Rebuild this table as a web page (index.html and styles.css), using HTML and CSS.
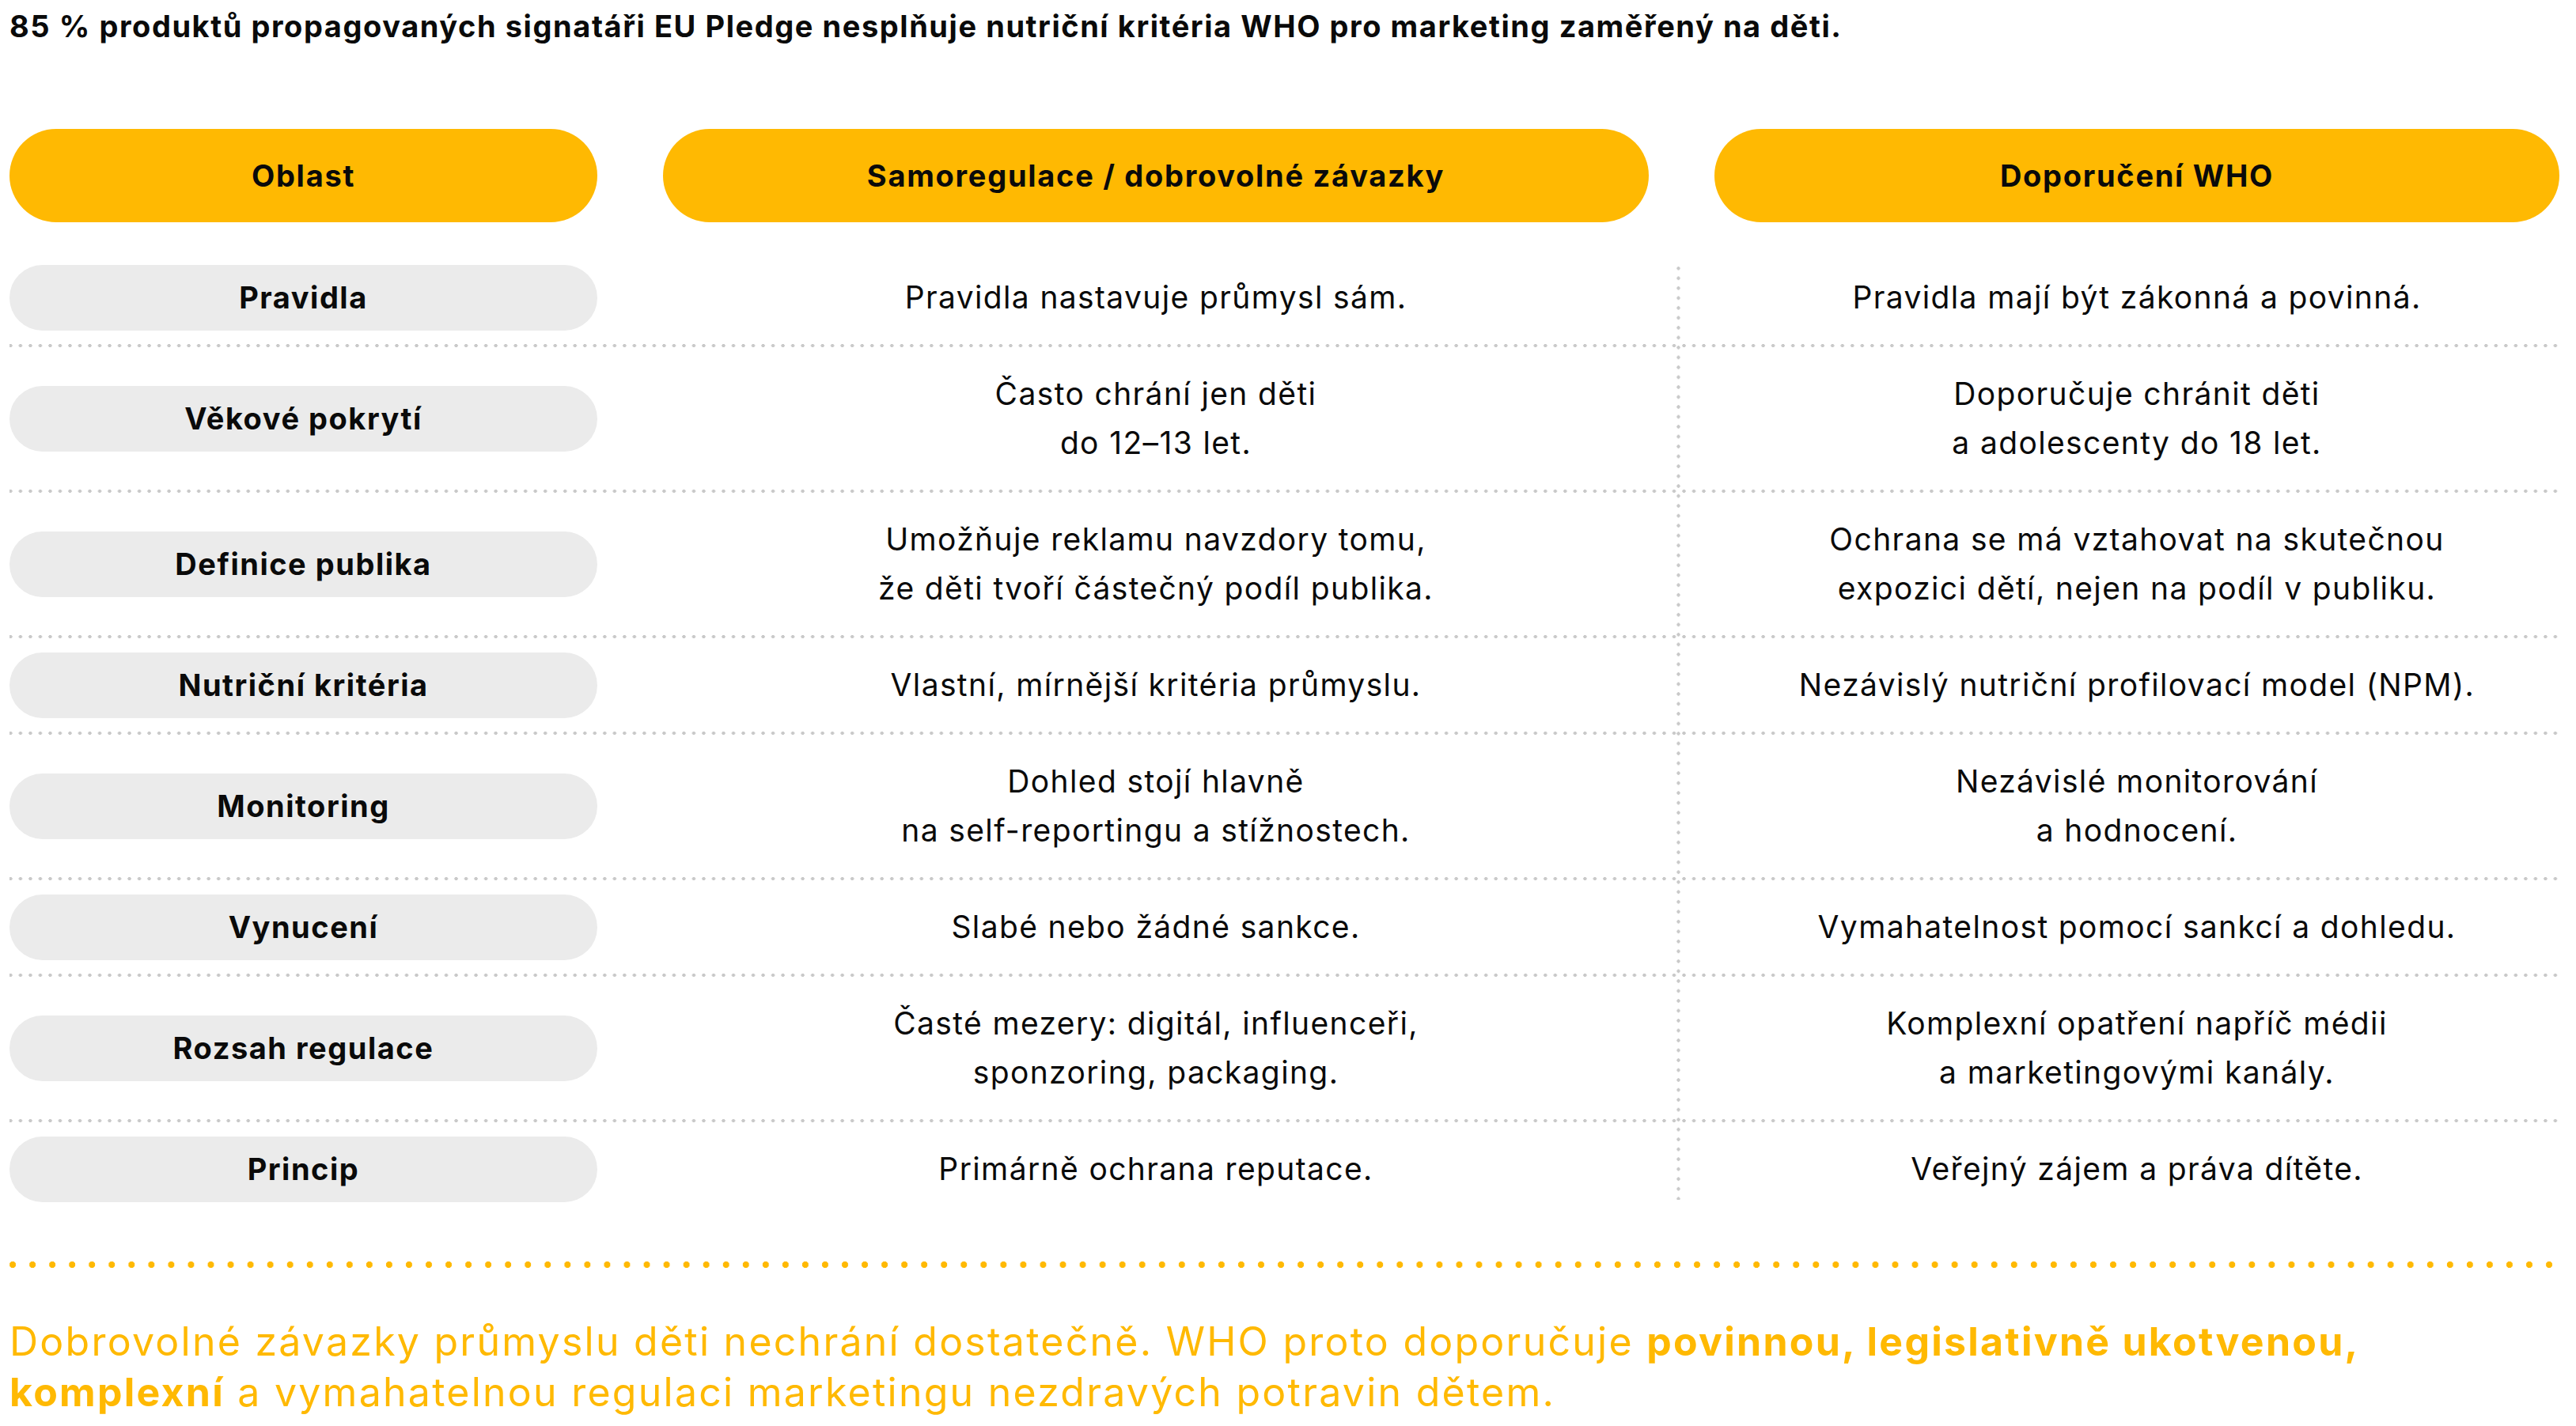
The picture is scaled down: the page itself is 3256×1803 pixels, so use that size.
FILE: index.html
```html
<!DOCTYPE html>
<html lang="cs">
<head>
<meta charset="utf-8">
<title>EU Pledge vs. WHO</title>
<link rel="stylesheet" href="styles.css">
</head>
<body>
<main class="page">
  <h1 class="title">85 % produktů propagovaných signatáři EU Pledge nesplňuje nutriční kritéria WHO pro marketing zaměřený na děti.</h1>

  <div class="thead">
    <div class="hpill">Oblast</div>
    <div class="hpill">Samoregulace / dobrovolné závazky</div>
    <div class="hpill">Doporučení WHO</div>
  </div>

  <div class="tbody">
    <div class="row">
      <div class="label">Pravidla</div>
      <div class="cell">Pravidla nastavuje průmysl sám.</div>
      <div class="cell">Pravidla mají být zákonná a povinná.</div>
    </div>
    <div class="row">
      <div class="label">Věkové pokrytí</div>
      <div class="cell">Často chrání jen děti<br>do 12–13 let.</div>
      <div class="cell">Doporučuje chránit děti<br>a adolescenty do 18 let.</div>
    </div>
    <div class="row">
      <div class="label">Definice publika</div>
      <div class="cell">Umožňuje reklamu navzdory tomu,<br>že děti tvoří částečný podíl publika.</div>
      <div class="cell">Ochrana se má vztahovat na skutečnou<br>expozici dětí, nejen na podíl v publiku.</div>
    </div>
    <div class="row">
      <div class="label">Nutriční kritéria</div>
      <div class="cell">Vlastní, mírnější kritéria průmyslu.</div>
      <div class="cell">Nezávislý nutriční profilovací model (NPM).</div>
    </div>
    <div class="row">
      <div class="label">Monitoring</div>
      <div class="cell">Dohled stojí hlavně<br>na self-reportingu a stížnostech.</div>
      <div class="cell">Nezávislé monitorování<br>a hodnocení.</div>
    </div>
    <div class="row">
      <div class="label">Vynucení</div>
      <div class="cell">Slabé nebo žádné sankce.</div>
      <div class="cell">Vymahatelnost pomocí sankcí a dohledu.</div>
    </div>
    <div class="row">
      <div class="label">Rozsah regulace</div>
      <div class="cell">Časté mezery: digitál, influenceři,<br>sponzoring, packaging.</div>
      <div class="cell">Komplexní opatření napříč médii<br>a marketingovými kanály.</div>
    </div>
    <div class="row">
      <div class="label">Princip</div>
      <div class="cell">Primárně ochrana reputace.</div>
      <div class="cell">Veřejný zájem a práva dítěte.</div>
    </div>
  </div>

  <div class="ydots"></div>

  <p class="summary">Dobrovolné závazky průmyslu děti nechrání dostatečně. WHO proto doporučuje <strong>povinnou, legislativně ukotvenou,</strong><br><strong>komplexní</strong> a vymahatelnou regulaci marketingu nezdravých potravin dětem.</p>
</main>
</body>
</html>
```

FILE: styles.css
```css
html, body {
  margin: 0;
  padding: 0;
  background: #ffffff;
}

body {
  font-family: "Inter", "Liberation Sans", sans-serif;
  color: #0a0a0a;
}

.page {
  width: 3223px;
  padding: 10px 21px 0 12px;
}

.title {
  margin: 0;
  font-size: 38px;
  line-height: 46px;
  font-weight: 700;
  letter-spacing: 0.041em;
}

.thead {
  display: grid;
  grid-template-columns: 743px 1246px 1068px;
  column-gap: 83px;
  margin-top: 107px;
}

.hpill {
  height: 118px;
  border-radius: 59px;
  background: #ffb902;
  display: flex;
  align-items: center;
  justify-content: center;
  font-size: 38px;
  font-weight: 700;
  letter-spacing: 0.045em;
}

.tbody {
  position: relative;
  margin-top: 36px;
}

.tbody::before {
  content: "";
  position: absolute;
  left: 2107px;
  top: 20px;
  bottom: 20px;
  width: 5px;
  background-image: radial-gradient(circle at center, #c9c9c9 1.9px, rgba(201,201,201,0) 2.4px);
  background-size: 5px 12.53px;
  background-repeat: repeat-y;
  background-position: 0 -4px;
}

.row {
  display: grid;
  grid-template-columns: 743px 1246px 1068px;
  column-gap: 83px;
  align-items: center;
  padding-bottom: 4px;
  background-image: radial-gradient(circle at center, #c9c9c9 1.9px, rgba(201,201,201,0) 2.4px);
  background-size: 12.53px 4px;
  background-repeat: repeat-x;
  background-position: -4.9px bottom;
}

.row:last-child {
  padding-bottom: 0;
  background: none;
}

.label {
  height: 83px;
  border-radius: 42px;
  background: #ebebeb;
  display: flex;
  align-items: center;
  justify-content: center;
  font-size: 38px;
  font-weight: 700;
  letter-spacing: 0.04em;
}

.cell {
  padding: 28px 0;
  text-align: center;
  font-size: 39px;
  line-height: 62px;
  letter-spacing: 0.035em;
}

.ydots {
  height: 8px;
  margin-top: 58px;
  background-image: radial-gradient(circle at center, #ffb902 3.8px, rgba(255,185,2,0) 4.4px);
  background-size: 25.06px 8px;
  background-repeat: repeat-x;
  background-position: -8.5px 0;
}

.summary {
  margin: 61px 0 0;
  font-size: 50px;
  line-height: 64px;
  letter-spacing: 0.045em;
  color: #ffb902;
}

.summary strong {
  font-weight: 700;
}
```
